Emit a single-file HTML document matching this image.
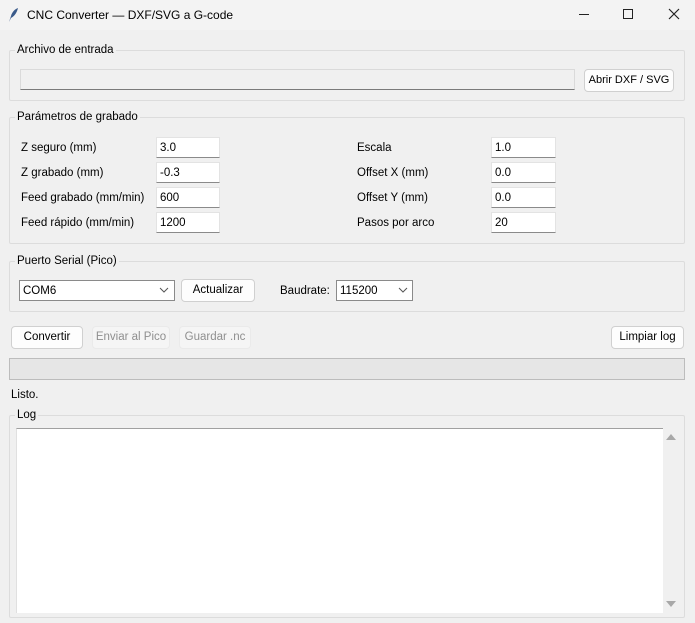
<!DOCTYPE html>
<html><head><meta charset="utf-8"><style>
*{box-sizing:border-box;margin:0;padding:0}
body{width:695px;height:623px;background:#f0f0f0;font-family:"Liberation Sans",sans-serif;font-size:11.5px;color:#000;position:relative;overflow:hidden}
.a{position:absolute}
.frame{position:absolute;border:1px solid #dcdcdc;border-radius:2px}
.lbl{position:absolute;background:#f0f0f0;padding:0 2px;line-height:14px}
.entry{position:absolute;background:#fff;border:1px solid #e3e3e3;border-bottom:1px solid #8a8a8a;height:21px;padding:3px 3px 0;line-height:15px}
.btn{position:absolute;background:#fdfdfd;border:1px solid #d0d0d0;border-radius:4px;text-align:center;line-height:20px;white-space:nowrap}
.dis{background:#f5f5f5;border-color:#eaeaea;color:#8f8f8f}
.t{position:absolute;line-height:14px}
</style></head><body>
<div class="a" style="left:0;top:0;width:695px;height:30px;background:#f3f3f3"></div>
<svg class="a" style="left:7px;top:7px" width="12" height="16" viewBox="0 0 12 16"><path d="M2 15 L4 9 C5 5 8 2 11 1 C10 5 8 9 4 11 Z" fill="#3a5a8a"/></svg>
<div class="t" style="left:27px;top:8px;font-size:12px">CNC Converter — DXF/SVG a G-code</div>
<div class="a" style="left:579px;top:14px;width:10px;height:1px;background:#222"></div>
<div class="a" style="left:623px;top:9px;width:10px;height:10px;border:1px solid #222"></div>
<svg class="a" style="left:668px;top:8px" width="12" height="12"><path d="M1 1L11 11M11 1L1 11" stroke="#222" stroke-width="1.2"/></svg>

<div class="frame" style="left:9px;top:50px;width:676px;height:51px"></div>
<div class="lbl" style="left:15px;top:43px">Archivo de entrada</div>
<div class="a" style="left:20px;top:69px;width:555px;height:21px;background:#f0f0f0;border:1px solid #dadada;border-bottom:1px solid #7a7a7a"></div>
<div class="btn" style="left:584px;top:69px;width:90px;height:23px;font-size:11px">Abrir DXF / SVG</div>

<div class="frame" style="left:9px;top:117px;width:676px;height:127px"></div>
<div class="lbl" style="left:15px;top:110px">Parámetros de grabado</div>
<div class="t" style="left:21px;top:141px">Z seguro (mm)</div>
<div class="t" style="left:21px;top:166px">Z grabado (mm)</div>
<div class="t" style="left:21px;top:191px">Feed grabado (mm/min)</div>
<div class="t" style="left:21px;top:216px">Feed rápido (mm/min)</div>
<div class="entry" style="left:156px;top:137px;width:64px">3.0</div>
<div class="entry" style="left:156px;top:162px;width:64px">-0.3</div>
<div class="entry" style="left:156px;top:187px;width:64px">600</div>
<div class="entry" style="left:156px;top:212px;width:64px">1200</div>
<div class="t" style="left:357px;top:141px">Escala</div>
<div class="t" style="left:357px;top:166px">Offset X (mm)</div>
<div class="t" style="left:357px;top:191px">Offset Y (mm)</div>
<div class="t" style="left:357px;top:216px">Pasos por arco</div>
<div class="entry" style="left:491px;top:137px;width:65px">1.0</div>
<div class="entry" style="left:491px;top:162px;width:65px">0.0</div>
<div class="entry" style="left:491px;top:187px;width:65px">0.0</div>
<div class="entry" style="left:491px;top:212px;width:65px">20</div>

<div class="frame" style="left:9px;top:261px;width:676px;height:51px"></div>
<div class="lbl" style="left:15px;top:254px">Puerto Serial (Pico)</div>
<div class="entry" style="left:19px;top:280px;width:156px;border-color:#8a8a8a">COM6</div>
<svg class="a" style="left:159px;top:287px" width="10" height="6"><path d="M1 1L5 5L9 1" stroke="#555" fill="none"/></svg>
<div class="btn" style="left:181px;top:279px;width:74px;height:23px">Actualizar</div>
<div class="t" style="left:280px;top:284px">Baudrate:</div>
<div class="entry" style="left:336px;top:280px;width:77px;border-color:#8a8a8a">115200</div>
<svg class="a" style="left:398px;top:287px" width="10" height="6"><path d="M1 1L5 5L9 1" stroke="#555" fill="none"/></svg>

<div class="btn" style="left:11px;top:326px;width:72px;height:23px">Convertir</div>
<div class="btn dis" style="left:92px;top:326px;width:78px;height:23px">Enviar al Pico</div>
<div class="btn dis" style="left:179px;top:326px;width:72px;height:23px">Guardar .nc</div>
<div class="btn" style="left:611px;top:326px;width:73px;height:23px">Limpiar log</div>

<div class="a" style="left:9px;top:358px;width:676px;height:22px;background:#e6e6e6;border:1px solid #bcbcbc"></div>
<div class="t" style="left:11px;top:388px">Listo.</div>

<div class="frame" style="left:9px;top:415px;width:676px;height:203px"></div>
<div class="lbl" style="left:15px;top:408px">Log</div>
<div class="a" style="left:16px;top:428px;width:647px;height:185px;background:#fff;border-top:1px solid #a0a0a0;border-left:1px solid #e0e0e0"></div>
<svg class="a" style="left:666px;top:433px" width="10" height="8"><path d="M0 7L5 1L10 7Z" fill="#a8a8a8"/></svg>
<svg class="a" style="left:666px;top:600px" width="10" height="8"><path d="M0 1L5 7L10 1Z" fill="#a8a8a8"/></svg>
</body></html>
